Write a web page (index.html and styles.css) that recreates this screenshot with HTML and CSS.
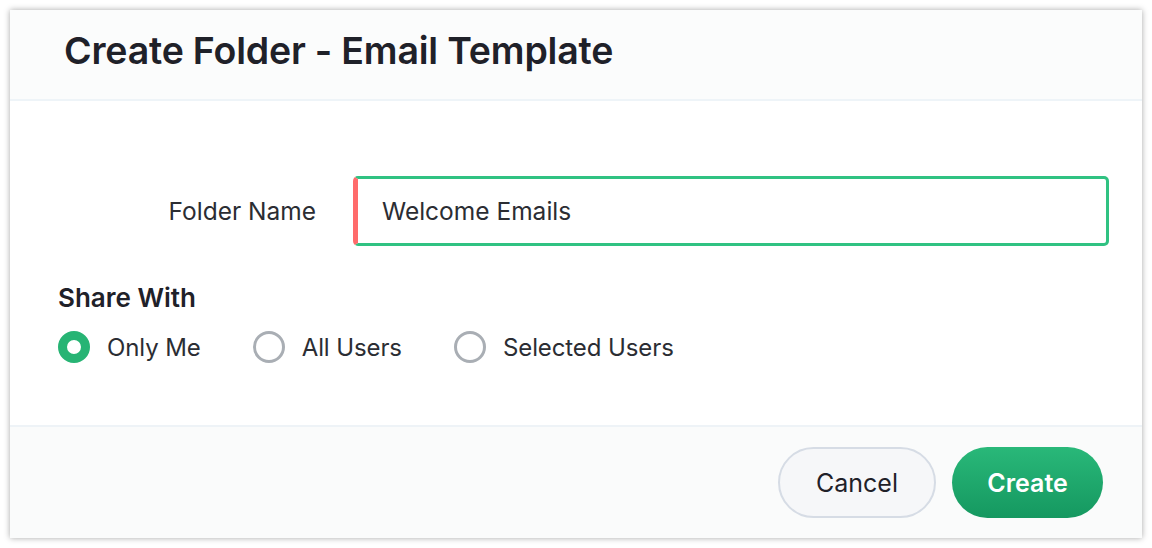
FILE: index.html
```html
<!DOCTYPE html>
<html lang="en">
<head>
    <meta charset="UTF-8">
    <meta name="viewport" content="width=device-width, initial-scale=1.0">
    <title>Create Folder - Email Template</title>
    <link rel="stylesheet" href="styles.css">
</head>
<body>
    <div class="dialog">
        <div class="dialog-header">
            <h2>Create Folder - Email Template</h2>
        </div>
        <div class="dialog-body">
            <div class="form-row">
                <label for="folderName">Folder Name</label>
                <div class="input-wrap">
                    <input type="text" id="folderName" value="Welcome Emails">
                </div>
            </div>
            <div class="share-title">Share With</div>
            <div class="radio-group">
                <label class="radio"><span class="dot checked"></span>Only Me</label>
                <label class="radio"><span class="dot"></span>All Users</label>
                <label class="radio"><span class="dot"></span>Selected Users</label>
            </div>
        </div>
        <div class="dialog-footer">
            <button class="btn-cancel">Cancel</button>
            <button class="btn-create">Create</button>
        </div>
    </div>
</body>
</html>
```

FILE: styles.css
```css
body {
    margin: 0;
    background-color: #fff;
    font-family: Inter, "Open Sans", sans-serif;
    color: #1f2129;
}
.dialog {
    margin: 10px;
    width: 1132px;
    height: 528px;
    box-sizing: border-box;
    background-color: #fff;
    box-shadow: 0 0 6px rgba(0,0,0,0.35);
    display: flex;
    flex-direction: column;
}
.dialog-header {
    height: 91px;
    box-sizing: border-box;
    background-color: #fbfcfc;
    border-bottom: 2px solid #eef4f8;
    padding: 0 0 9px 54px;
    display: flex;
    align-items: center;
}
h2 {
    margin: 0;
    font-size: 37.5px;
    font-weight: 600;
    letter-spacing: -0.2px;
    color: #1f2129;
}
.dialog-body {
    height: 324px;
    padding-top: 75px;
    box-sizing: border-box;
}
.form-row {
    display: flex;
    align-items: center;
}
.form-row label {
    width: 306px;
    text-align: right;
    font-size: 24.5px;
    color: #2b2d33;
    margin-right: 37px;
}
.input-wrap {
    width: 756px;
    height: 70px;
    box-sizing: border-box;
    border: 3px solid #30c282;
    border-left: 5px solid #ff6b6b;
    border-radius: 5px;
    display: flex;
    align-items: center;
}
.input-wrap input {
    border: none;
    outline: none;
    background: none;
    width: 100%;
    padding: 0 0 0 24px;
    font-family: inherit;
    font-size: 24.5px;
    color: #2b2d33;
}
.share-title {
    margin: 36px 0 0 48px;
    font-size: 26px;
    font-weight: 600;
    color: #1f2129;
}
.radio-group {
    display: flex;
    margin: 18px 0 0 48px;
    gap: 52px;
}
.radio {
    display: flex;
    align-items: center;
    font-size: 24px;
    letter-spacing: -0.1px;
    color: #2b2d33;
}
.dot {
    width: 32px;
    height: 32px;
    box-sizing: border-box;
    border-radius: 50%;
    border: 3px solid #a9aeb4;
    margin-right: 17px;
}
.dot.checked {
    border: 9px solid #27b474;
}
.dialog-footer {
    flex: 1;
    background-color: #fafbfb;
    border-top: 2px solid #eef3f7;
    display: flex;
    justify-content: flex-end;
    align-items: flex-start;
    padding: 20px 39px 0 0;
    gap: 16px;
}
button {
    height: 71px;
    border-radius: 36px;
    font-family: inherit;
    font-size: 25px;
    cursor: pointer;
}
.btn-cancel {
    width: 158px;
    background-color: #f6f7f9;
    border: 2px solid #d6dce5;
    color: #1f2129;
}
.btn-create {
    width: 151px;
    border: none;
    color: #fff;
    font-weight: 600;
    background: linear-gradient(#29b879, #159860);
}
```
